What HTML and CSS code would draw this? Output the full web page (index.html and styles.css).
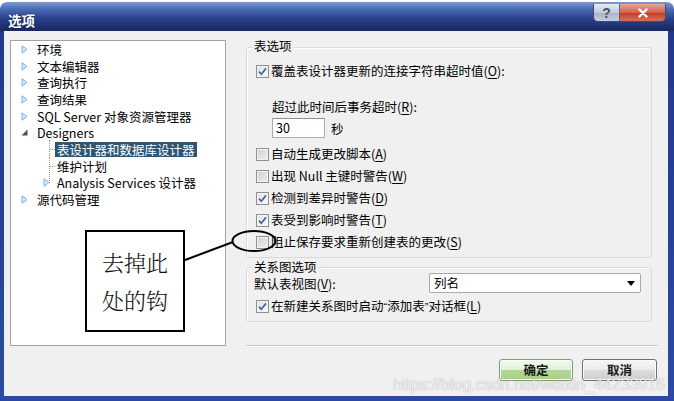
FILE: index.html
```html
<!DOCTYPE html>
<html lang="zh-CN">
<head>
<meta charset="utf-8">
<title>选项</title>
<link rel="stylesheet" href="styles.css">
</head>
<body>
<div class="window">
  <div class="titlebar">
    <span class="title">选项</span>
    <div class="caption-btns">
      <span class="help">?</span>
      <span class="close"><svg width="14" height="10" viewBox="0 0 14 10"><path d="M3.5 1.5L10.5 8.5M10.5 1.5L3.5 8.5" stroke="#fff" stroke-width="2.4" stroke-linecap="round"/></svg></span>
    </div>
  </div>
  <div class="client">
    <div class="body">
      <div class="main">
        <div class="tree">
          <div class="node l0"><span class="tw"><svg width="7" height="9" viewBox="0 0 7 9"><path d="M1 .8L6 4.5L1 8.2Z" fill="#d4e8f7" stroke="#7eb0dc"/></svg></span><span class="lbl">环境</span></div>
          <div class="node l0"><span class="tw"><svg width="7" height="9" viewBox="0 0 7 9"><path d="M1 .8L6 4.5L1 8.2Z" fill="#d4e8f7" stroke="#7eb0dc"/></svg></span><span class="lbl">文本编辑器</span></div>
          <div class="node l0"><span class="tw"><svg width="7" height="9" viewBox="0 0 7 9"><path d="M1 .8L6 4.5L1 8.2Z" fill="#d4e8f7" stroke="#7eb0dc"/></svg></span><span class="lbl">查询执行</span></div>
          <div class="node l0"><span class="tw"><svg width="7" height="9" viewBox="0 0 7 9"><path d="M1 .8L6 4.5L1 8.2Z" fill="#d4e8f7" stroke="#7eb0dc"/></svg></span><span class="lbl">查询结果</span></div>
          <div class="node l0"><span class="tw"><svg width="7" height="9" viewBox="0 0 7 9"><path d="M1 .8L6 4.5L1 8.2Z" fill="#d4e8f7" stroke="#7eb0dc"/></svg></span><span class="lbl">SQL Server 对象资源管理器</span></div>
          <div class="node l0"><span class="tw"><svg width="7" height="7" viewBox="0 0 7 7"><path d="M6.5 .5V6.5H.5Z" fill="#3f4f6b"/></svg></span><span class="lbl">Designers</span></div>
          <div class="node l1 mid"><span class="tw"></span><span class="lbl sel">表设计器和数据库设计器</span></div>
          <div class="node l1 mid"><span class="tw"></span><span class="lbl">维护计划</span></div>
          <div class="node l1 last"><span class="tw"><svg width="7" height="9" viewBox="0 0 7 9"><path d="M1 .8L6 4.5L1 8.2Z" fill="#d4e8f7" stroke="#7eb0dc"/></svg></span><span class="lbl">Analysis Services 设计器</span></div>
          <div class="node l0"><span class="tw"><svg width="7" height="9" viewBox="0 0 7 9"><path d="M1 .8L6 4.5L1 8.2Z" fill="#d4e8f7" stroke="#7eb0dc"/></svg></span><span class="lbl">源代码管理</span></div>
        </div>
        <div class="right">
          <div class="group g1">
            <div class="gtitle">表选项</div>
            <div class="cbrow r20 m7"><span class="cb"><svg width="11" height="11" viewBox="0 0 11 11"><path d="M2 5.6L4.3 8.2L9 2.4" fill="none" stroke="#4661a6" stroke-width="1.7"/></svg></span><span>覆盖表设计器更新的连接字符串超时值(<u>O</u>):</span></div>
            <div class="sub">超过此时间后事务超时(<u>R</u>):</div>
            <div class="inrow"><span class="input">30</span><span class="unit">秒</span></div>
            <div class="cbrow r22 m5"><span class="cb off"></span><span>自动生成更改脚本(<u>A</u>)</span></div>
            <div class="cbrow r22"><span class="cb off"></span><span>出现 Null 主键时警告(<u>W</u>)</span></div>
            <div class="cbrow r22"><span class="cb"><svg width="11" height="11" viewBox="0 0 11 11"><path d="M2 5.6L4.3 8.2L9 2.4" fill="none" stroke="#4661a6" stroke-width="1.7"/></svg></span><span>检测到差异时警告(<u>D</u>)</span></div>
            <div class="cbrow r22"><span class="cb"><svg width="11" height="11" viewBox="0 0 11 11"><path d="M2 5.6L4.3 8.2L9 2.4" fill="none" stroke="#4661a6" stroke-width="1.7"/></svg></span><span>表受到影响时警告(<u>T</u>)</span></div>
            <div class="cbrow r22"><span class="cb off"></span><span>阻止保存要求重新创建表的更改(<u>S</u>)</span></div>
          </div>
          <div class="group g2">
            <div class="gtitle small">关系图选项</div>
            <div class="viewrow"><span class="vlabel">默认表视图(<u>V</u>):</span><span class="select"><span>列名</span><svg width="8" height="5" viewBox="0 0 8 5"><path d="M0 0H8L4 5Z" fill="#000"/></svg></span></div>
            <div class="cbrow r22 m2"><span class="cb"><svg width="11" height="11" viewBox="0 0 11 11"><path d="M2 5.6L4.3 8.2L9 2.4" fill="none" stroke="#4661a6" stroke-width="1.7"/></svg></span><span>在新建关系图时启动<span class="q">“</span>添加表<span class="q">”</span>对话框(<u>L</u>)</span></div>
          </div>
          <div class="sep"></div>
        </div>
      </div>
      <div class="buttons">
        <span class="btn ok">确定</span>
        <span class="btn cancel">取消</span>
      </div>
    </div>
  </div>
  <svg class="annot" width="674" height="401" viewBox="0 0 674 401">
    <line x1="185" y1="260" x2="233" y2="242" stroke="#000" stroke-width="2"/>
    <ellipse cx="254" cy="241" rx="21.5" ry="10" fill="none" stroke="#000" stroke-width="2"/>
  </svg>
  <div class="callout"><span>去掉此</span><span>处的钩</span></div>
  <div class="wm">https://blog.csdn.net/weixin_44233916</div>
</div>
</body>
</html>
```
FILE: styles.css
```css
* { box-sizing: border-box; }
html, body { margin: 0; padding: 0; background: #fff; }
body {
  width: 674px;
  height: 401px;
  overflow: hidden;
  font-family: "Noto Sans CJK SC", sans-serif;
  font-size: 12.5px;
  color: #000;
}
u { text-decoration: underline; text-underline-offset: 2px; }
.q { font-family: "Liberation Sans", sans-serif; font-size: 11px; }

.window {
  position: relative;
  width: 674px;
  height: 401px;
  padding-top: 2px;
  display: flex;
  flex-direction: column;
  background: #fff;
}

/* title bar */
.titlebar {
  height: 29px;
  display: flex;
  align-items: flex-start;
  border-radius: 7px 7px 0 0;
  background: linear-gradient(to bottom, #7c9bd6 0%, #4d6fb8 22%, #2a4088 58%, #18275f 100%);
  padding-left: 8px;
}
.title {
  margin-top: 10px;
  line-height: 16px;
  font-size: 13.5px;
  font-weight: bold;
  color: #fff;
  text-shadow: 0 0 2px #0b1640;
}
.caption-btns {
  margin-left: auto;
  margin-right: 8px;
  margin-top: 2px;
  display: flex;
  height: 18px;
  border: 1px solid #3a4a78;
  border-top: none;
  border-radius: 0 0 5px 5px;
  overflow: hidden;
}
.help {
  width: 26px;
  display: flex;
  align-items: center;
  justify-content: center;
  font-family: "Liberation Sans", sans-serif;
  font-weight: bold;
  font-size: 14px;
  color: #4a5164;
  background: linear-gradient(to bottom, #e6ebf3, #c1c9d8 50%, #a9b3c7 51%, #c5cedd);
  border-right: 1px solid #5a6480;
}
.close {
  width: 45px;
  display: flex;
  align-items: center;
  justify-content: center;
  background: linear-gradient(to bottom, #e9a597, #d4614f 50%, #c23a22 51%, #d8705a);
}

/* client area */
.client {
  flex: 1;
  display: flex;
  background: linear-gradient(to bottom, #20398a, #2b4ba3);
  padding: 0 6px 5px 4px;
}
.body {
  flex: 1;
  background: #f0f0f0;
  padding: 9px 10px 0 6px;
  display: flex;
  flex-direction: column;
}
.main {
  display: flex;
  gap: 20px;
  height: 306px;
}

/* tree */
.tree {
  width: 216px;
  height: 306px;
  background: #fff;
  border: 1px solid #a3a3a3;
}
.node {
  position: relative;
  height: 16.7px;
  display: flex;
  align-items: center;
  white-space: nowrap;
  line-height: 15px;
}
.l0 { padding-left: 10px; }
.l0 .tw { width: 16px; display: flex; align-items: center; }
.l1 { padding-left: 32px; }
.l1 .tw { width: 12px; display: flex; align-items: center; position: relative; z-index: 1; }
.lbl { padding: 0 2px; margin-left: -2px; }
.l1 .lbl { margin-left: 0; }
.lbl.sel {
  background: #2d5672;
  color: #fff;
  height: 15px;
}
.l1::before {
  content: "";
  position: absolute;
  left: 38px;
  top: -1px;
  bottom: 0;
  border-left: 1px dotted #9a9a9a;
}
.l1.last::before { bottom: 50%; }
.l1::after {
  content: "";
  position: absolute;
  left: 39px;
  width: 5px;
  top: 50%;
  border-top: 1px dotted #9a9a9a;
}
.l1.last::after { left: 46px; width: 3px; }

/* right side */
.right {
  width: 412px;
  display: flex;
  flex-direction: column;
}
.group {
  width: 406px;
  border: 1px solid #d6dadd;
  border-radius: 3px;
  box-shadow: inset 1px 1px 0 #fff;
  padding: 0 0 4px 9px;
}
.g1 { margin-top: 7px; }
.g2 { margin-top: 9px; }
.gtitle {
  width: fit-content;
  margin: -10px 0 0 -4px;
  padding: 0 2px;
  background: #f0f0f0;
  line-height: 16px;
  height: 16px;
}
.gtitle.small {
  margin-top: -7px;
  line-height: 12px;
  height: 12px;
}
.cbrow {
  display: flex;
  align-items: center;
  gap: 2px;
  white-space: nowrap;
  line-height: 16px;
}
.r20 { height: 20px; }
.r22 { height: 22px; }
.m7 { margin-top: 7px; }
.m5 { margin-top: 5px; }
.m2 { margin-top: 2px; }
.cb {
  width: 13px;
  height: 13px;
  flex: none;
  border: 1px solid #8e8f8f;
  background: linear-gradient(135deg, #e2e2e2, #fafafa);
  box-shadow: inset 0 0 0 1px #f4f4f4;
  display: flex;
  align-items: center;
  justify-content: center;
}
.cb.off {
  background: linear-gradient(135deg, #cfcfcf, #f0f0f0);
}
.sub {
  margin-top: 16px;
  height: 20px;
  line-height: 20px;
  padding-left: 16px;
}
.inrow {
  margin-top: 1px;
  height: 20px;
  padding-left: 16px;
  display: flex;
  align-items: center;
}
.input {
  width: 53px;
  height: 20px;
  background: #fff;
  border: 1px solid #abadb3;
  border-top-color: #8e9096;
  padding-left: 3px;
  line-height: 18px;
}
.unit { margin-left: 6px; }
.viewrow {
  height: 20px;
  display: flex;
  align-items: center;
  margin-left: -2px;
}
.vlabel { line-height: 14px; margin-top: 2px; }
.select {
  margin-left: auto;
  margin-right: 10px;
  width: 212px;
  height: 20px;
  background: #fff;
  border: 1px solid #a7a9ad;
  border-radius: 2px;
  display: flex;
  align-items: center;
  padding: 0 5px 0 4px;
  justify-content: space-between;
  line-height: 16px;
}
.sep {
  margin-top: auto;
  height: 2px;
  border-top: 1px solid #c6cacd;
  border-bottom: 1px solid #fff;
  margin-bottom: -1px;
}

/* buttons */
.buttons {
  margin-top: 13px;
  padding-right: 1px;
  display: flex;
  justify-content: flex-end;
  gap: 9px;
}
.btn {
  width: 75px;
  height: 22px;
  display: flex;
  align-items: center;
  justify-content: center;
  border-radius: 3px;
  font-weight: bold;
  color: #1a1a1a;
  line-height: 16px;
}
.ok {
  width: 74px;
  border: 1px solid #8a9a80;
  background: linear-gradient(to bottom, #f2faee 0%, #e1f1d7 48%, #b4d898 52%, #a6cf86 100%);
  box-shadow: inset 0 0 0 1px #f6fff0;
}
.cancel {
  border: 1px solid #707070;
  background: linear-gradient(to bottom, #f6f6f6 0%, #ebebeb 48%, #dcdcdc 52%, #cfcfcf 100%);
  box-shadow: inset 0 0 0 1px #fbfbfb;
}

/* annotations */
.annot {
  position: absolute;
  left: 0;
  top: 0;
  pointer-events: none;
}
.callout {
  position: absolute;
  left: 85px;
  top: 230px;
  width: 100px;
  height: 102px;
  border: 2px solid #000;
  background: #fff;
  display: flex;
  flex-direction: column;
  align-items: center;
  justify-content: center;
  font-family: "Noto Serif CJK SC", "Noto Sans CJK SC", serif;
  font-weight: 300;
  font-size: 22px;
  line-height: 38px;
  color: #111;
}
.wm {
  position: absolute;
  left: 393px;
  top: 377px;
  font-family: "Liberation Sans", sans-serif;
  font-size: 16px;
  line-height: 16px;
  color: rgba(255, 255, 255, 0.85);
  text-shadow: 0 0 1px rgba(0, 0, 0, 0.4);
  white-space: nowrap;
  pointer-events: none;
}
```
